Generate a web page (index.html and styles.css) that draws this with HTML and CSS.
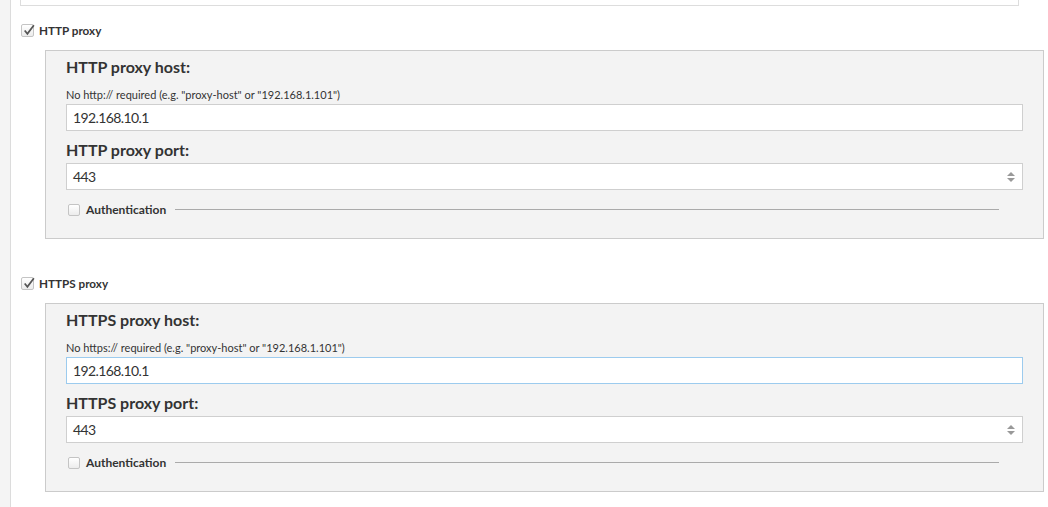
FILE: index.html
```html
<!DOCTYPE html>
<html lang="en">
<head>
  <meta charset="UTF-8">
  <title>Proxy settings</title>
  <link rel="stylesheet" href="styles.css">
</head>
<body>
  <div class="page">
    <div class="prev-box"></div>

    <!-- HTTP -->
    <label class="toggle">
      <span class="check checked"><svg viewBox="0 0 13 13"><path d="M2.5 7 L5 10 L11 2" /></svg></span>
      HTTP proxy
    </label>
    <div class="group">
      <div class="field-title">HTTP proxy host:</div>
      <div class="hint">No http:// required (e.g. "proxy-host" or "192.168.1.101")</div>
      <div class="input">192.168.10.1</div>
      <div class="field-title">HTTP proxy port:</div>
      <div class="input number">443
        <svg class="spin" viewBox="0 0 10 12"><path d="M5 1 L9 5 L1 5 Z" /><path d="M1 7 L9 7 L5 11 Z" /></svg>
      </div>
      <div class="auth">
        <span class="check small"></span>
        <span class="auth-text">Authentication</span>
        <span class="rule"></span>
      </div>
    </div>

    <!-- HTTPS -->
    <label class="toggle">
      <span class="check checked"><svg viewBox="0 0 13 13"><path d="M2.5 7 L5 10 L11 2" /></svg></span>
      HTTPS proxy
    </label>
    <div class="group">
      <div class="field-title">HTTPS proxy host:</div>
      <div class="hint">No https:// required (e.g. "proxy-host" or "192.168.1.101")</div>
      <div class="input focus">192.168.10.1</div>
      <div class="field-title">HTTPS proxy port:</div>
      <div class="input number">443
        <svg class="spin" viewBox="0 0 10 12"><path d="M5 1 L9 5 L1 5 Z" /><path d="M1 7 L9 7 L5 11 Z" /></svg>
      </div>
      <div class="auth">
        <span class="check small"></span>
        <span class="auth-text">Authentication</span>
        <span class="rule"></span>
      </div>
    </div>
  </div>
</body>
</html>
```

FILE: styles.css
```css
body {
  margin: 0;
  background: #f4f4f4;
  font-family: Lato, "Open Sans", Arial, sans-serif;
  color: #333;
}
.page {
  margin-left: 10px;
  border-left: 1px solid #dcdcdc;
  background: #fff;
  height: 507px;
  overflow: hidden;
}
.prev-box {
  margin-left: 9px;
  width: 997px;
  height: 5px;
  border: 1px solid #ddd;
  border-top: none;
}
.toggle {
  display: flex;
  align-items: center;
  margin: 17px 0 0 10px;
  font-size: 11.7px;
  font-weight: bold;
  height: 14px;
}
.check {
  display: inline-block;
  box-sizing: border-box;
  width: 13px;
  height: 13px;
  border: 1px solid #c4c4c4;
  border-radius: 2px;
  background: linear-gradient(#fff, #ececec);
  margin-right: 5px;
  position: relative;
}
.check svg {
  position: absolute;
  left: 0;
  top: -2px;
  width: 14px;
  height: 14px;
  fill: none;
  stroke: #555;
  stroke-width: 1.6;
}
.group {
  margin: 13px 0 0 34px;
  width: 957px;
  padding: 6px 20px 21px 20px;
  background: #f3f3f3;
  border: 1px solid #cbcbcb;
}
.group + .toggle {
  margin-top: 37px;
}
.field-title {
  font-size: 16px;
  font-weight: bold;
  line-height: 20px;
  color: #333;
}
.hint {
  font-size: 11px;
  line-height: 14px;
  margin: 11px 0 2px;
  color: #333;
}
.input {
  box-sizing: border-box;
  height: 27px;
  border: 1px solid #cfcfcf;
  background: #fff;
  font-size: 14px;
  letter-spacing: -0.6px;
  line-height: 25px;
  padding-left: 6px;
  margin-bottom: 9px;
  position: relative;
}
.input.number {
  margin-bottom: 7px;
}
.input.focus {
  border-color: #9ccbee;
}
.field-title + .input {
  margin-top: 3px;
}
.spin {
  position: absolute;
  right: 6px;
  top: 7px;
  width: 10px;
  height: 12px;
  fill: #999;
}
.auth {
  display: flex;
  align-items: center;
  margin: 12px 24px 0 2px;
  font-size: 12px;
  font-weight: bold;
}
.check.small {
  width: 12px;
  height: 12px;
  margin-right: 6px;
}
.rule {
  flex: 1;
  height: 1px;
  background: #aaa;
  margin-left: 9px;
}
```
